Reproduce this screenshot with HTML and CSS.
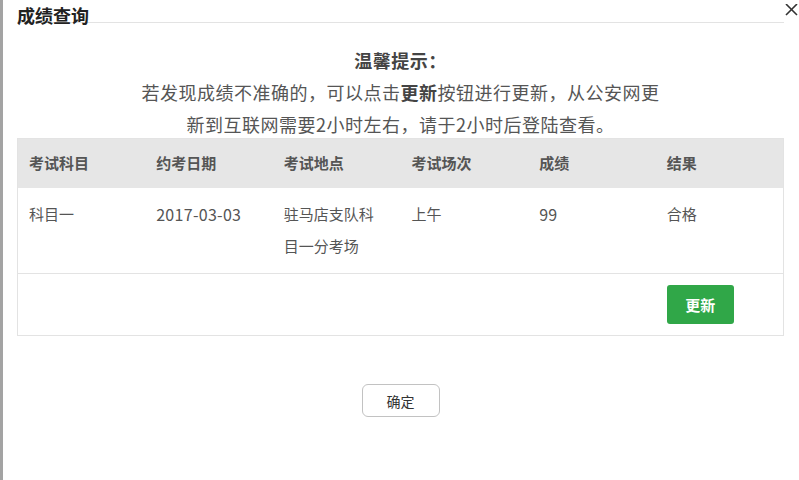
FILE: index.html
```html
<!DOCTYPE html>
<html lang="zh-CN">
<head>
  <meta charset="UTF-8" />
  <title>成绩查询</title>
  <link rel="stylesheet" href="styles.css">
</head>
<body>

  <div class="dialog">
    <div class="dialog-title">成绩查询</div>
    <span class="close-btn">
      <svg width="13" height="12" viewBox="0 0 13 12"><path d="M1 0 L12 11 M12 0 L1 11" stroke="#333" stroke-width="1.6" fill="none"/></svg>
    </span>

    <div class="tips">
      <div class="tips-head">温馨提示：</div>
      <div>若发现成绩不准确的，可以点击<b>更新</b>按钮进行更新，从公安网更</div>
      <div>新到互联网需要2小时左右，请于2小时后登陆查看。</div>
    </div>

    <table class="score-table">
      <thead>
        <tr>
          <th>考试科目</th>
          <th>约考日期</th>
          <th>考试地点</th>
          <th>考试场次</th>
          <th>成绩</th>
          <th>结果</th>
        </tr>
      </thead>
      <tbody>
        <tr>
          <td>科目一</td>
          <td class="num">2017-03-03</td>
          <td>驻马店支队科目一分考场</td>
          <td>上午</td>
          <td class="num">99</td>
          <td>合格</td>
        </tr>
        <tr class="action-row">
          <td colspan="5"></td>
          <td><button class="btn-update">更新</button></td>
        </tr>
      </tbody>
    </table>

    <div class="footer">
      <button class="btn-ok">确定</button>
    </div>
  </div>

</body>
</html>
```

FILE: styles.css
```css
body {
  margin: 0;
  background: #fff;
  font-family: "Noto Sans CJK SC", "Microsoft YaHei", sans-serif;
  color: #555;
}
.dialog {
  position: relative;
  width: 781px;
  height: 480px;
  padding: 0 12px 0 14px;
  border-left: 3px solid #a3a3a3;
  border-right: 1px solid #b5b5b5;
  box-sizing: content-box;
  overflow: hidden;
}
.dialog-title {
  width: 767px;
  height: 22px;
  line-height: 30px;
  font-size: 18px;
  font-weight: bold;
  color: #222;
  border-bottom: 1px solid #e3e3e3;
}
.close-btn {
  position: absolute;
  top: -3px;
  right: 12px;
}
.tips {
  width: 767px;
  margin: 21px 0 -2px;
  text-align: center;
  font-size: 18px;
  letter-spacing: 0.5px;
  line-height: 32px;
  color: #555;
}
.tips-head {
  font-weight: bold;
  color: #444;
}
.tips b {
  color: #444;
}
.score-table {
  width: 767px;
  border-collapse: collapse;
  border: 1px solid #e3e3e3;
  table-layout: fixed;
  font-size: 15px;
}
.score-table th {
  background: #e6e6e6;
  text-align: left;
  font-weight: bold;
  color: #555;
  padding: 8px 14px 9px 11px;
  line-height: 32px;
}
.score-table td {
  vertical-align: top;
  padding: 10px 14px 11px 11px;
  line-height: 32px;
  border-bottom: 1px solid #e3e3e3;
}
.score-table td.num {
  font-size: 16px;
  letter-spacing: 0.3px;
}
.action-row td {
  padding: 11px 11px 11px;
}
.btn-update {
  display: block;
  width: 67px;
  height: 39px;
  border: none;
  border-radius: 3px;
  background: #30a748;
  color: #fff;
  font-family: inherit;
  font-size: 15px;
  font-weight: bold;
  cursor: pointer;
}
.footer {
  width: 767px;
  margin-top: 48px;
  display: flex;
  justify-content: center;
}
.btn-ok {
  width: 78px;
  height: 33px;
  border: 1px solid #c2c2c2;
  border-radius: 6px;
  background: #fff;
  color: #333;
  font-family: inherit;
  font-size: 14px;
  cursor: pointer;
}
```
